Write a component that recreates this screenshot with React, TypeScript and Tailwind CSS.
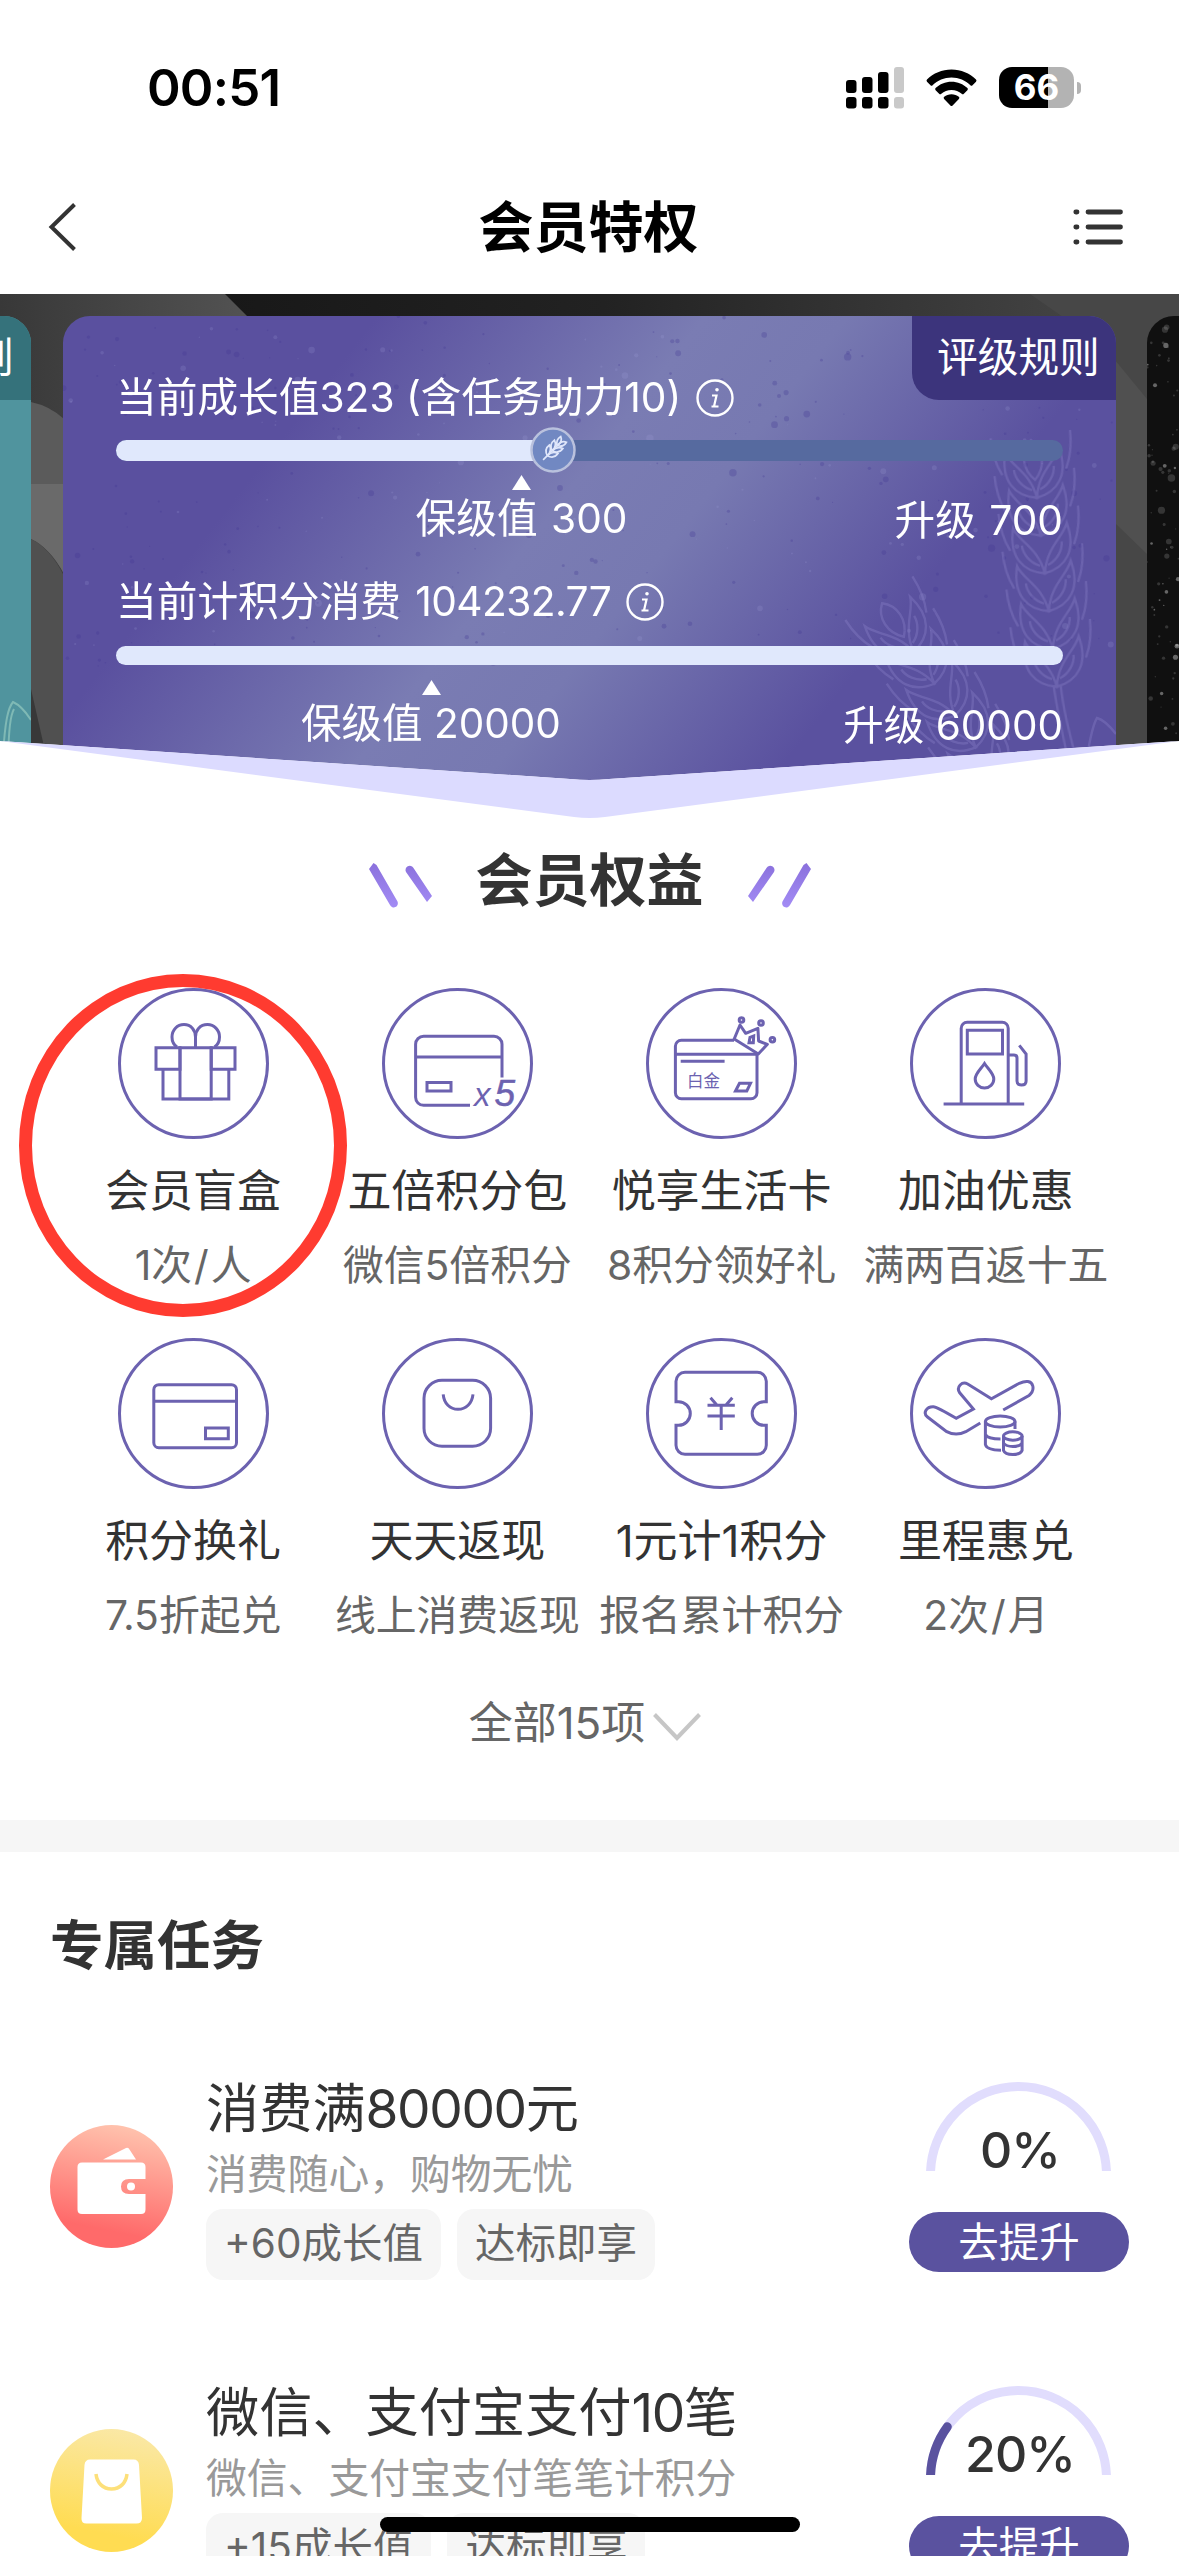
import type { ReactNode } from "react";

const purple = "#6c62b0";

const GiftIcon = () => (
  <>
    <path d="M38 59.7H62V81.3H38ZM93.2 59.7H117V81.3H93.2Z" />
    <path d="M62 59.7H93.2V111H62Z" />
    <path d="M45 81.3V111H110.8V81.3" />
    <path d="M59 59C56 57 54 53 54 49C54 42 59 36.6 66 36.6C73 36.6 77.5 42 77.5 49V59.7" />
    <path d="M96.5 59C99.5 57 101.5 53 101.5 49C101.5 42 96 36.6 89.5 36.6C82 36.6 77.5 42 77.5 49" />
  </>
);

const FiveTimesIcon = () => (
  <>
    <path d="M120 89.5V56.3A8 8 0 0 0 112 48.3H41.6A8 8 0 0 0 33.6 56.3V109.3A8 8 0 0 0 41.6 117.3H88" />
    <path d="M33.6 69H120M45 94.5H69V103H45Z" />
    <text x="92" y="118" fontSize="33" fontStyle="italic" fontFamily="'Liberation Sans', sans-serif" fill={purple} stroke="none">x</text>
    <text x="112.5" y="118" fontSize="37" fontStyle="italic" fontFamily="'Liberation Sans', sans-serif" fill={purple} stroke={purple} strokeWidth="0.5">5</text>
  </>
);

const PlatinumIcon = () => (
  <>
    <path d="M88 52.3H35.4A6 6 0 0 0 29.4 58.3V104.7A6 6 0 0 0 35.4 110.7H105A6 6 0 0 0 111 104.7V66.3H29.4" />
    <path d="M34.7 73.3H78.6M93.5 95.3H104.5L100.8 103H89.5Z" />
    <path d="M88.2 51L94 37L99.7 45.3L111.9 40.3L112.6 53L121.4 56.3L112.3 66Z" strokeLinejoin="round" />
    <path d="M104 49.3L107.7 48L107.3 54.7L103 54.7Z" />
    <circle cx="95.5" cy="32" r="2.3" />
    <circle cx="115" cy="35" r="2.3" />
    <circle cx="126.4" cy="51.7" r="2.3" />
    <text x="41" y="98.5" fontSize="16.5" fontFamily="'Noto Sans CJK SC', sans-serif" fill={purple} stroke="none">白金</text>
  </>
);

const GasIcon = () => (
  <>
    <path d="M51.2 116V40.3A6 6 0 0 1 57.2 34.3H92.2A6 6 0 0 1 98.2 40.3V116M33.6 116H114.2" />
    <path d="M57.3 42.3H92.5V66H57.3Z" />
    <path d="M74.5 75.5C71 81 65.2 85.5 65.2 91A9.3 9 0 0 0 83.8 91C83.8 85.5 78 81 74.5 75.5Z" />
    <path d="M98.2 67H104Q107 67 107 70V93Q107 97 111.5 97Q116.1 97 116.1 93V66L109.3 57.3" />
  </>
);

const CardIcon = () => (
  <>
    <rect x="35.8" y="46.7" width="82.7" height="63" rx="5" />
    <path d="M35.8 63.3H118.5M87.5 90H110.3V100.7H87.5Z" />
  </>
);

const BagIcon = () => (
  <>
    <rect x="42" y="42.3" width="66.6" height="66" rx="18" />
    <path d="M61.2 56.3C62 65.5 68 71.3 76 71.3C84 71.3 90 65.5 91 56.3" />
  </>
);

const TicketIcon = () => (
  <>
    <path d="M39 34.3H111.3A9 9 0 0 1 120.3 43.3V63.7H118A11.8 11.8 0 0 0 118 87.3H120.3V107.3A9 9 0 0 1 111.3 116.3H39A9 9 0 0 1 30 107.3V87.3H32.5A11.8 11.8 0 0 0 32.5 63.7H30V43.3A9 9 0 0 1 39 34.3Z" />
    <path d="M64.5 59.7L71 67.3M86.3 59.7L79.8 67.3M61.5 67.3H88.8M61.5 78H88.8M75.2 67V92" />
  </>
);

const MilesIcon = () => (
  <>
    <path d="M70.3 85L55.8 93.7Q46 98.5 36.7 93.7L17.5 79C12.5 75 16.5 68.5 23.3 68.7Q27 69 46.2 80.3L63.4 71L49.5 54.5C46 49 52 43 57.7 46L81.4 60.7L109.3 45.3C115.5 42.5 121.5 42.5 122.8 48Q124 53.5 119 57.5L93.2 72" />
    <ellipse cx="90.2" cy="83.5" rx="14.8" ry="5.5" />
    <path d="M75.4 83.5V106.5Q76.5 112 91 112.3M75.4 96.5Q78 101 90.5 101M105 83.5V91" />
    <ellipse cx="102.8" cy="98" rx="9.3" ry="4.2" />
    <path d="M93.5 98V112.5Q95 116.5 102.8 116.5Q110.5 116.5 112.1 112.5V98M93.5 105Q96 108.5 102.8 108.5Q110 108.5 112.1 105" />
  </>
);

const benefits: { icon: ReactNode; name: string; desc: string }[] = [
  { icon: <GiftIcon />, name: "会员盲盒", desc: "1次/人" },
  { icon: <FiveTimesIcon />, name: "五倍积分包", desc: "微信5倍积分" },
  { icon: <PlatinumIcon />, name: "悦享生活卡", desc: "8积分领好礼" },
  { icon: <GasIcon />, name: "加油优惠", desc: "满两百返十五" },
  { icon: <CardIcon />, name: "积分换礼", desc: "7.5折起兑" },
  { icon: <BagIcon />, name: "天天返现", desc: "线上消费返现" },
  { icon: <TicketIcon />, name: "1元计1积分", desc: "报名累计积分" },
  { icon: <MilesIcon />, name: "里程惠兑", desc: "2次/月" },
];

const WalletBadge = () => (
  <svg className="size-[123px]" viewBox="0 0 123 123">
    <defs>
      <linearGradient id="walletBg" x1="0.6" y1="0" x2="0.4" y2="1">
        <stop offset="0" stopColor="#ffc3ae" />
        <stop offset="0.85" stopColor="#ff6a6a" />
      </linearGradient>
    </defs>
    <circle cx="61.5" cy="61.5" r="61.5" fill="url(#walletBg)" />
    <path d="M53 34.5L76 23Q78.5 22 79.5 24.5L86 34.5Z" fill="#fff" />
    <path d="M32 37.5H91Q95.5 37.5 95.5 42V54H79Q71 54 71 61.5Q71 69 79 69H95.5V84.5Q95.5 89 91 89H32Q27.5 89 27.5 84.5V42Q27.5 37.5 32 37.5Z" fill="#fff" />
    <circle cx="81" cy="61.5" r="4" fill="#fff" />
  </svg>
);

const ShoppingBadge = () => (
  <svg className="size-[123px]" viewBox="0 0 123 123">
    <defs>
      <linearGradient id="bagBg" x1="0.6" y1="0" x2="0.4" y2="1">
        <stop offset="0" stopColor="#fae8a6" />
        <stop offset="0.85" stopColor="#ffdc52" />
      </linearGradient>
    </defs>
    <circle cx="61.5" cy="61.5" r="61.5" fill="url(#bagBg)" />
    <path d="M40 30.5H83.5Q88.5 30.5 89 36L92 89Q92 94.5 86.5 94.5H36.5Q31 94.5 31.5 89L34.5 36Q35 30.5 40 30.5Z" fill="#fff" />
    <path d="M46 45C47 54 53 60 61.5 60C70 60 76 54 77 45" fill="none" stroke="#fde07a" strokeWidth="3.5" />
  </svg>
);

const tasks = [
  { badge: <WalletBadge />, title: ["消费满", "80000", "元"], desc: "消费随心，购物无忧", tags: ["+60成长值", "达标即享"], percent: 0 },
  { badge: <ShoppingBadge />, title: ["微信、支付宝支付", "10", "笔"], desc: "微信、支付宝支付笔笔计积分", tags: ["+15成长值", "达标即享"], percent: 20 },
];

// fixed seed so the sprinkled dots always land in the same spots
const makeDots = (count: number, w: number, h: number, seed: number) => {
  let s = seed;
  const next = () => {
    s = (s * 16807) % 2147483647;
    return s / 2147483647;
  };
  return Array.from({ length: count }, () => ({ x: next() * w, y: next() * h, r: 0.6 + next() * next() * 3.4, light: next() > 0.7 }));
};
const cardDots = makeDots(380, 1053, 350, 4211);
const sideDots = makeDots(90, 32, 480, 977);

const Wheat = ({ transform, rows }: { transform: string; rows: number }) => (
  <g transform={transform}>
    {Array.from({ length: rows }, (_, i) => (
      <g key={i} transform={`translate(0 ${i * 38})`}>
        <path d="M0 38C-22 34 -34 18 -27 -10C-22 4 -4 12 0 38ZM0 38C22 34 34 18 27 -10C22 4 4 12 0 38Z" />
        <path d="M-4 30C-14 26 -20 16 -20 8M4 30C14 26 20 16 20 8M-32 12C-38 0 -40 -14 -40 -26M32 12C38 0 40 -14 40 -26" />
      </g>
    ))}
    <path d="M0 -20C-12 -10 -12 8 0 20C12 8 12 -10 0 -20Z" />
    <path d={`M-3 ${rows * 38}C-2 ${rows * 38 + 30} 2 ${rows * 38 + 60} 8 ${rows * 38 + 110}M4 ${rows * 38}C4 ${rows * 38 + 30} 10 ${rows * 38 + 60} 17 ${rows * 38 + 110}`} />
  </g>
);

const InfoIcon = () => (
  <svg className="size-[38px]" viewBox="0 0 38 38" fill="none" stroke="#fff">
    <circle cx="19" cy="19" r="17.5" strokeWidth="2.4" />
    <circle cx="21" cy="10.8" r="1.8" fill="#fff" stroke="none" />
    <path d="M16 16.5H20.5L18 27.5H22.5M15.5 27.5H18" strokeWidth="2.2" />
  </svg>
);

const Pointer = () => (
  <svg className="h-[15px] w-[19px]" viewBox="0 0 19 15">
    <path d="M9.5 0L19 15H0Z" fill="#fff" />
  </svg>
);

const StatusBar = () => (
  <div className="flex h-[175px] items-center justify-between pr-[98px] pl-[147px]">
    <span className="text-[51px] leading-none font-semibold tracking-[-0.8px] text-black">00:51</span>
    <div className="flex items-center">
      <svg className="h-[42px] w-[58px]" viewBox="0 0 58 42">
        <rect x="0" y="13" width="10.5" height="13" rx="3" />
        <rect x="16" y="10" width="10.5" height="16" rx="3" />
        <rect x="32" y="5" width="10.5" height="21" rx="3" />
        <rect x="48" y="0" width="10" height="26" rx="3" fill="#c9c9c9" />
        <rect x="0" y="30" width="10.5" height="11.5" rx="3" />
        <rect x="16" y="30" width="10.5" height="11.5" rx="3" />
        <rect x="32" y="30" width="10.5" height="11.5" rx="3" />
        <rect x="48" y="30" width="10" height="11.5" rx="3" fill="#c9c9c9" />
      </svg>
      <svg className="ml-[22px] h-[38px] w-[51px]" viewBox="0 0 51 38">
        <path d="M25.5 0.5C35 0.5 43.7 4.3 50 10.5Q51 11.6 50 12.7L46.5 16.2Q45.5 17.2 44.4 16.2C39.5 11.5 32.8 8.6 25.5 8.6C18.2 8.6 11.5 11.5 6.6 16.2Q5.5 17.2 4.5 16.2L1 12.7Q0 11.6 1 10.5C7.3 4.3 16 0.5 25.5 0.5Z" />
        <path d="M25.5 12.8C31.7 12.8 37.2 15.2 41.4 19.1Q42.4 20.2 41.4 21.2L37.9 24.7Q36.8 25.7 35.7 24.7C33 22.3 29.4 20.9 25.5 20.9C21.6 20.9 18 22.3 15.3 24.7Q14.2 25.7 13.1 24.7L9.6 21.2Q8.6 20.2 9.6 19.1C13.8 15.2 19.3 12.8 25.5 12.8Z" />
        <path d="M25.5 25.2C28.3 25.2 30.9 26.2 32.8 27.8Q34 28.9 32.9 30L26.6 36.4Q25.5 37.4 24.4 36.4L18.1 30Q17 28.9 18.2 27.8C20.1 26.2 22.7 25.2 25.5 25.2Z" />
      </svg>
      <div className="ml-[22px] flex h-[41px] w-[75px] items-center justify-center rounded-[13px] bg-[linear-gradient(to_right,#000_66%,#b3b3b3_66%)]">
        <span className="text-[35px] leading-none font-bold text-white">66</span>
      </div>
      <div className="ml-[3px] h-[12px] w-[4px] rounded-r-full bg-[#b3b3b3]" />
    </div>
  </div>
);

const NavBar = () => (
  <div className="flex h-[119px] items-center justify-between pr-[56px] pb-[15px] pl-[47px]">
    <svg className="h-[50px] w-[50px]" viewBox="0 0 50 50" fill="none" stroke="#333" strokeWidth="4">
      <path d="M27.5 2.5L4.5 25L27.5 47.5" />
    </svg>
    <h1 className="ml-[7px] text-[55px] leading-[80px] font-bold text-black">会员特权</h1>
    <svg className="h-[36px] w-[50px]" viewBox="0 0 50 36" stroke="#333" strokeWidth="4.8" strokeLinecap="round">
      <path d="M2.8 3H4M15 3H47.5M2.8 18H4M15 18H47.5M2.8 33H4M15 33H47.5" />
    </svg>
  </div>
);

const LevelCard = () => (
  <div className="relative h-[480px] w-[1053px] shrink-0 overflow-hidden rounded-t-[27px] bg-[linear-gradient(128deg,#5a509f_22%,#7a7cb3_45%,#7779b1_55%,#5a519f_75%)] px-[53px] pt-[54px] text-white">
    <svg className="absolute inset-0 size-full" viewBox="0 0 1053 480" fill="none">
      {cardDots.map((d, i) => (
        <circle key={i} cx={d.x} cy={d.y} r={d.r} fill={d.light ? "#a9a8dc" : "#3f3692"} opacity={d.light ? 0.18 : 0.28} />
      ))}
      <g stroke="#8f86cc" strokeWidth="2.4" opacity="0.34">
        <Wheat transform="translate(970 144) rotate(-6)" rows={6} />
        <Wheat transform="translate(830 304) rotate(-33)" rows={5} />
        <path d="M1024 440C1027 425 1029 410 1034 402Q1042 404 1053 418" />
      </g>
    </svg>
    <div className="absolute top-0 right-0 h-[84px] w-[204px] rounded-bl-[27px] bg-[#3c347c] pl-[25px] text-[40.7px] leading-[84px]">评级规则</div>

    <div className="relative">
      <div className="flex h-[56px] items-center gap-[15px] text-[40.7px] leading-[56px]">
        <span>当前成长值323 (含任务助力10)</span>
        <InfoIcon />
      </div>
      <div className="relative mt-[14px] h-[21px] rounded-full bg-[#566a9f]">
        <div className="h-full w-[438px] rounded-l-full bg-[#e0e8fc]" />
        <svg className="absolute top-[-14px] left-[413px] size-[48px]" viewBox="0 0 48 48" fill="none">
          <circle cx="24" cy="24" r="21.5" fill="#7188c2" stroke="#b9c1dd" strokeWidth="2.5" />
          <g stroke="#dfe6fa" strokeWidth="1.7" transform="rotate(45 24 24)">
            <path d="M24 12V38" />
            <path d="M24 18Q18.5 15 20 9Q25 11 24 18Q23 11 28 9Q29.5 15 24 18M24 25Q17 23 18 16Q24 18 24 25Q24 18 30 16Q31 23 24 25M24 32Q17 30 18 23Q24 25 24 32Q24 25 30 23Q31 30 24 32" />
          </g>
        </svg>
      </div>
      <div className="mt-[14px] flex h-[74px] items-end justify-between text-[40.7px] leading-[56px] [word-spacing:2px]">
        <div className="ml-[298px] flex w-[215px] flex-col items-center gap-[1px] self-start whitespace-nowrap">
          <Pointer />
          <span>保级值 300</span>
        </div>
        <span>升级 700</span>
      </div>
      <div className="mt-[25px] flex h-[56px] items-center gap-[15px] text-[40.7px] leading-[56px] [word-spacing:3px]">
        <span>
          当前计积分消费 <span className="tracking-[-0.6px]">104232.77</span>
        </span>
        <InfoIcon />
      </div>
      <div className="mt-[16px] h-[19px] rounded-full bg-[#e0e8fc]" />
      <div className="mt-[15px] flex h-[74px] items-end justify-between text-[40.5px] leading-[56px]">
        <div className="ml-[185px] flex w-[260px] flex-col items-center gap-[1px] self-start whitespace-nowrap">
          <Pointer />
          <span>保级值 20000</span>
        </div>
        <span>升级 60000</span>
      </div>
    </div>
  </div>
);

const Banner = () => (
  <div className="relative h-[524px] overflow-hidden bg-[#2c2c2c]">
    <svg className="absolute inset-0 size-full" viewBox="0 0 1179 524">
      <defs>
        <linearGradient id="bannerTop" x1="0" x2="1">
          <stop offset="0" stopColor="#181818" />
          <stop offset="0.4" stopColor="#222" />
          <stop offset="1" stopColor="#4a4a4a" />
        </linearGradient>
        <linearGradient id="bannerLeft" x1="0" y1="0" x2="1" y2="0">
          <stop offset="0" stopColor="#383838" />
          <stop offset="1" stopColor="#535353" />
        </linearGradient>
      </defs>
      <rect x="220" width="959" height="524" fill="url(#bannerTop)" />
      <path d="M0 0H225L255 30V524H0Z" fill="url(#bannerLeft)" />
      <path d="M31 108Q50 112 64 125V270Q50 250 31 244Z" fill="#5b5b5b" />
      <path d="M31 190H64V280Q50 254 31 245Z" fill="#6a6a6a" />
      <path d="M31 245Q50 254 64 282V524H31Z" fill="#505050" />
      <path d="M31 395L48 470H31Z" fill="#383838" />
      <path d="M1030 0H1179V524H1116V60Z" fill="#474747" />
      <path d="M1110 60L1147 105V260L1116 230Z" fill="#505050" />
    </svg>
    <div className="relative flex gap-[32px] pt-[22px]">
      <div className="relative h-[480px] w-[31px] shrink-0 overflow-hidden rounded-tr-[27px] bg-[#50949e]">
        <div className="flex h-[84px] justify-end bg-[#35727b] pr-[17px] text-[40.7px] leading-[84px] text-white">则</div>
        <svg className="absolute bottom-[30px] left-0 h-[100px] w-[31px]" viewBox="0 0 31 100" fill="none" stroke="#7fb9b5" strokeWidth="2">
          <path d="M3 90C5 55 8 42 13 36Q22 40 31 54M8 90C9 65 10 50 14 43" />
        </svg>
      </div>
      <LevelCard />
      <div className="-ml-[1px] h-[480px] w-[32px] shrink-0 overflow-hidden rounded-tl-[27px] bg-[#101010]">
        <svg className="size-full" viewBox="0 0 32 480">
          {sideDots.map((d, i) => (
            <circle key={i} cx={d.x} cy={d.y} r={d.r} fill="#bbb" opacity={d.light ? 0.5 : 0.22} />
          ))}
        </svg>
      </div>
    </div>
    <svg className="absolute inset-0 size-full" viewBox="0 0 1179 524">
      <path d="M0 447L570 485Q589.5 487 609 485L1179 447V524H0Z" fill="#fff" />
      <path d="M0 447L570 485Q589.5 487 609 485L1179 447L605 523Q589.5 525 574 523Z" fill="#dcdbff" />
    </svg>
  </div>
);

const Slashes = ({ flip }: { flip?: boolean }) => (
  <svg className={flip ? "mt-[9px] h-[48px] w-[64px] -scale-x-100" : "mt-[9px] h-[48px] w-[64px]"} viewBox="0 0 64 48" fill="none">
    <defs>
      <linearGradient id="slash" gradientUnits="userSpaceOnUse" x1="0" y1="0" x2="0" y2="48">
        <stop offset="0" stopColor="#8a70dc" />
        <stop offset="1" stopColor="#a48df6" />
      </linearGradient>
    </defs>
    <path d="M4.5 1L0 7L21 43A4 4 0 0 0 28.5 39.5L7.5 3Z" fill="url(#slash)" />
    <path d="M37 10A4 4 0 0 1 44.5 6L63 34L58 40Z" fill="url(#slash)" />
  </svg>
);

const Gauge = ({ percent }: { percent: number }) => (
  <div className="relative right-[1px] flex h-[89px] w-[185px] items-end justify-center">
    <svg className="absolute inset-0 size-full" viewBox="0 0 185 89" fill="none" strokeWidth="9">
      <path d="M4.5 95V92.5A88 88 0 0 1 180.5 92.5V95" stroke="#e1ddfd" />
      {percent > 0 && <path d="M4.5 92.5A88 88 0 0 1 180.5 92.5" pathLength="100" stroke="#5a529f" strokeLinecap="round" strokeDasharray={`${percent} 200`} />}
    </svg>
    <span className="relative left-[2px] text-[50px] leading-[42px] font-medium tracking-[-1px] text-[#333]">{percent}%</span>
  </div>
);

export default function App() {
  return (
    <div className="relative h-[2556px] w-[1179px] overflow-hidden bg-white font-[Inter,'Noto_Sans_CJK_SC',sans-serif]">
      <StatusBar />
      <NavBar />
      <Banner />

      {/* 会员权益 */}
      <div className="flex flex-col items-center pt-[23px]">
        <div className="flex items-center gap-[43px]">
          <Slashes />
          <h2 className="text-[57px] leading-[80px] font-bold text-[#333]">会员权益</h2>
          <Slashes flip />
        </div>
        <div className="mt-[67px] grid w-[1057px] grid-cols-4 gap-y-[47px]">
          {benefits.map((item) => (
            <div key={item.name} className="flex flex-col items-center whitespace-nowrap">
              <svg className="size-[151px]" viewBox="0 0 151 151" fill="none" stroke={purple} strokeWidth="3">
                <circle cx="75.5" cy="75.5" r="74" />
                {item.icon}
              </svg>
              <p className="mt-[22px] text-[44px] leading-[60px] text-[#333]">{item.name}</p>
              <p className="mt-[17px] mb-[-1px] text-[40.8px] leading-[54px] text-[#666]">
                {item.desc.split("/").map((part, i) => (
                  <span key={part}>
                    {i > 0 && <span className="px-[2px]">/</span>}
                    {part}
                  </span>
                ))}
              </p>
            </div>
          ))}
        </div>
        <div className="mt-[52px] flex h-[60px] items-center gap-[8px] pr-[9px] text-[44px] leading-[60px] text-[#666]">
          <span>全部15项</span>
          <svg className="mt-[7px] h-[28px] w-[48px]" viewBox="0 0 48 28" fill="none" stroke="#c6c6c6" strokeWidth="4">
            <path d="M1.5 1.5L24 25L46.5 1.5" />
          </svg>
        </div>
      </div>

      <div className="mt-[67px] h-[32px] bg-[#f6f6f6]" />

      {/* 专属任务 */}
      <div className="px-[50px] pt-[54px]">
        <h2 className="text-[53.5px] leading-[80px] font-bold text-[#333]">专属任务</h2>
        <div className="mt-[91px] flex flex-col gap-[101px]">
          {tasks.map((task) => (
            <div key={task.desc} className="flex h-[203px] items-start">
              <div className="mt-[48px]">{task.badge}</div>
              <div className="ml-[33px] flex-1 whitespace-nowrap">
                <p className="text-[53.2px] leading-[64px] text-[#333]">
                  {task.title[0]}
                  <span className="tracking-[-1.4px]">{task.title[1]}</span>
                  {task.title[2]}
                </p>
                <p className="mt-[8px] text-[40.8px] leading-[50px] text-[#999]">{task.desc}</p>
                <div className="mt-[10px] flex gap-[16px] text-[40.5px] leading-[70px] text-[#666]">
                  {task.tags.map((tag) => (
                    <span key={tag} className="h-[71px] rounded-[17px] bg-[#f6f6f6] px-[18px]">{tag}</span>
                  ))}
                </div>
              </div>
              <div className="mt-[5px] flex w-[220px] flex-col items-center">
                <Gauge percent={task.percent} />
                <button className="mt-[41px] h-[60px] w-[220px] rounded-full bg-[#5a529f] text-[40.5px] leading-[61px] text-white">去提升</button>
              </div>
            </div>
          ))}
        </div>
      </div>

      {/* hand-drawn marker around the first benefit */}
      <div className="absolute top-[974px] left-[19px] h-[343px] w-[328px] rounded-[50%] border-[13px] border-[#ff3b30]" />
      {/* home indicator */}
      <div className="absolute top-[2517px] left-[380px] h-[15px] w-[420px] rounded-full bg-black" />
    </div>
  );
}
